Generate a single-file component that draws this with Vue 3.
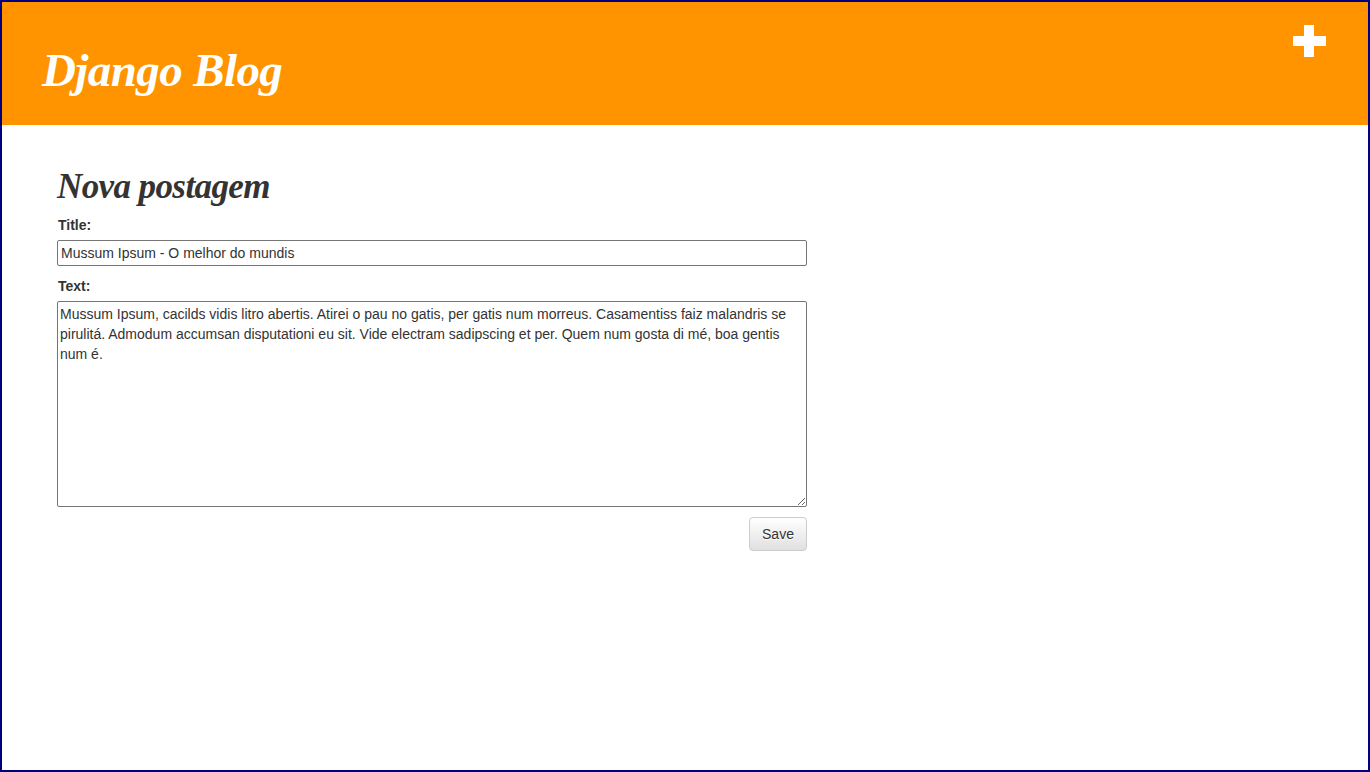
<script setup>
import { ref } from 'vue'
const title = ref('Mussum Ipsum - O melhor do mundis')
const text = ref('Mussum Ipsum, cacilds vidis litro abertis. Atirei o pau no gatis, per gatis num morreus. Casamentiss faiz malandris se pirulitá. Admodum accumsan disputationi eu sit. Vide electram sadipscing et per. Quem num gosta di mé, boa gentis num é.')
</script>

<template>
  <div class="page">
    <header class="header">
      <h1 class="brand">Django Blog</h1>
      <a class="add" href="#" aria-label="Nova postagem">
        <svg width="33" height="32" viewBox="0 0 33 32">
          <path d="M11 0h10v11h12v10H21v11H11V21H0V11h11z" fill="#fff" />
        </svg>
      </a>
    </header>
    <main class="content">
      <h2 class="heading">Nova postagem</h2>
      <form class="form" @submit.prevent>
        <label class="label" for="t">Title:</label>
        <input id="t" v-model="title" class="field input" type="text" />
        <label class="label" for="x">Text:</label>
        <textarea id="x" v-model="text" class="field area"></textarea>
        <div class="actions">
          <button class="save" type="submit">Save</button>
        </div>
      </form>
    </main>
  </div>
</template>

<style>
html, body { margin: 0; height: 100%; background: #fff; }
</style>

<style scoped>
.page {
  box-sizing: border-box;
  height: 772px;
  border: 2px solid #00007f;
  background: #fff;
  color: #333;
  font-family: "Liberation Sans", Arial, sans-serif;
  font-size: 14px;
  line-height: 20px;
}
.header {
  box-sizing: border-box;
  height: 123px;
  background: #ff9400;
  padding: 23px 42px 0 40px;
  display: flex;
  justify-content: space-between;
  align-items: flex-start;
}
.brand {
  margin: 17px 0 0;
  font-family: "Liberation Serif", serif;
  font-style: italic;
  font-weight: 700;
  font-size: 47px;
  line-height: 56px;
  color: #fff;
  letter-spacing: -0.6px;
}
.add { display: block; height: 32px; }
.add svg { display: block; }
.content {
  padding: 39px 0 0 55px;
  width: 750px;
}
.heading {
  margin: 0;
  font-family: "Liberation Serif", serif;
  font-style: italic;
  font-weight: 700;
  font-size: 35px;
  line-height: 46px;
  letter-spacing: -0.6px;
  color: #333;
}
.form { display: flex; flex-direction: column; margin-top: 5px; }
.label { font-weight: 700; font-size: 14px; line-height: 20px; margin-bottom: 5px; padding-left: 1px; }
.field {
  box-sizing: border-box;
  width: 750px;
  border: 1px solid #767676;
  border-radius: 2px;
  background: #fff;
  color: #333;
  font-family: "Liberation Sans", Arial, sans-serif;
  font-size: 14px;
  line-height: 20px;
  outline: none;
}
.input { height: 26px; padding: 1px 2px 1px 3px; margin-bottom: 10px; }
.area { height: 206px; padding: 2px; display: block; }
.actions { display: flex; justify-content: flex-end; margin-top: 10px; }
.save {
  box-sizing: border-box;
  width: 58px;
  height: 34px;
  padding: 6px 12px;
  border: 1px solid #ccc;
  border-radius: 4px;
  background: linear-gradient(to bottom, #fff, #e0e0e0);
  color: #333;
  font-family: "Liberation Sans", Arial, sans-serif;
  font-size: 14px;
  line-height: 20px;
  text-shadow: 0 1px 0 #fff;
}
</style>
